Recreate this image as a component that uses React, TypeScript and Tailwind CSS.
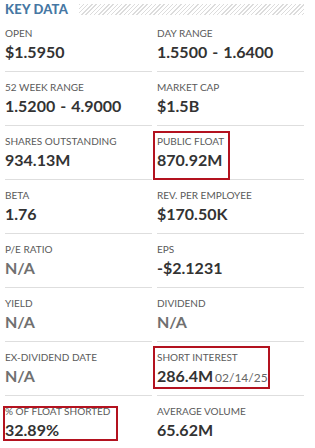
import React from 'react';

type Item = {
  label: string;
  value: string;
  sub?: string;
  na?: boolean;
  box?: string; // red annotation box classes
};

const rows: Item[] = [
  { label: 'OPEN', value: '$1.5950' },
  { label: 'DAY RANGE', value: '1.5500 - 1.6400' },
  { label: '52 WEEK RANGE', value: '1.5200 - 4.9000' },
  { label: 'MARKET CAP', value: '$1.5B' },
  { label: 'SHARES OUTSTANDING', value: '934.13M' },
  { label: 'PUBLIC FLOAT', value: '870.92M', box: 'top-[5px] -bottom-px -left-[4px] w-[77px]' },
  { label: 'BETA', value: '1.76' },
  { label: 'REV. PER EMPLOYEE', value: '$170.50K' },
  { label: 'P/E RATIO', value: 'N/A', na: true },
  { label: 'EPS', value: '-$2.1231' },
  { label: 'YIELD', value: 'N/A', na: true },
  { label: 'DIVIDEND', value: 'N/A', na: true },
  { label: 'EX-DIVIDEND DATE', value: 'N/A', na: true },
  { label: 'SHORT INTEREST', value: '286.4M', sub: '02/14/25', box: 'top-[4px] bottom-[6px] -left-[4px] w-[117px]' },
  { label: '% OF FLOAT SHORTED', value: '32.89%', box: 'top-[10px] bottom-[8px] -left-[2px] w-[115px]' },
  { label: 'AVERAGE VOLUME', value: '65.62M' },
];

// ranges get a little extra room round the dash
const Value = ({ v }: { v: string }) => {
  const parts = v.split(' - ');
  if (parts.length < 2) return <>{v}</>;
  return (
    <>
      {parts[0]}
      <span className="mx-[5px]">-</span>
      {parts[1]}
    </>
  );
};

const Cell = ({ item }: { item: Item }) => (
  <div className="relative h-[54px] border-b border-[#dedede] pt-[8px]">
    {item.box && <span className={`absolute border-2 border-[#b3121f] ${item.box}`} />}
    <div className="text-[10px] leading-[14px] text-[#5a5a5a] whitespace-nowrap">{item.label}</div>
    <div
      className={`mt-[2px] text-[16px] leading-[20px] font-bold whitespace-nowrap ${
        item.na ? 'text-[#707070]' : 'text-[#333]'
      }`}
    >
      <Value v={item.value} />
      {item.sub && <span className="ml-[2px] text-[12px] font-normal text-[#666]">{item.sub}</span>}
    </div>
  </div>
);

export default function App() {
  return (
    <div className="w-[315px] h-[448px] overflow-hidden bg-white pl-[5px] pr-[11px] font-['Lato',sans-serif]">
      {/* header */}
      <div className="flex h-[18px] items-center gap-[11px]">
        <h2 className="text-[13px] leading-[20px] font-black text-[#4677a3] tracking-[0.2px]">KEY DATA</h2>
        <div className="h-[11px] flex-1 bg-[repeating-linear-gradient(135deg,#dcdcdc_0px,#dcdcdc_1px,transparent_1px,transparent_3px)]" />
      </div>

      <div className="grid grid-cols-[147px_1fr] gap-x-[5px]">
        {rows.map((r) => (
          <Cell key={r.label} item={r} />
        ))}
      </div>
    </div>
  );
}
